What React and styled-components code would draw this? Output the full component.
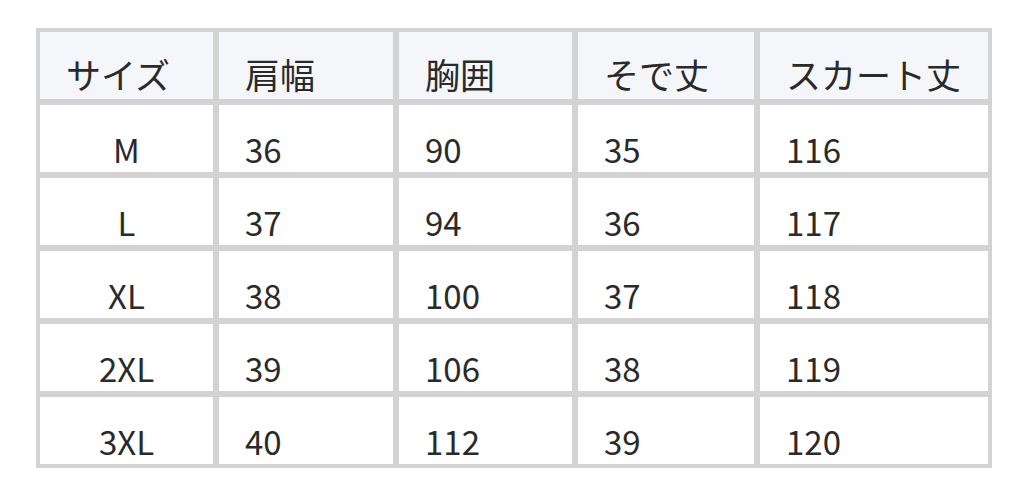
import React from 'react';
import styled, { createGlobalStyle } from 'styled-components';

const GlobalStyle = createGlobalStyle`
  body {
    margin: 0;
    background: #fff;
    font-family: "Noto Sans CJK JP", "Noto Sans", sans-serif;
  }
`;

const Page = styled.div`
  width: 1028px;
  height: 495px;
  padding: 28px 0 0 36px;
  box-sizing: border-box;
`;

const Table = styled.div`
  display: grid;
  grid-template-columns: 173px 174px 173px 176px 228px;
  grid-auto-rows: 67px;
  gap: 6px;
  width: 956px;
  box-sizing: border-box;
  padding: 4px;
  background: #d3d3d3;
`;

const Cell = styled.div`
  display: flex;
  align-items: flex-end;
  justify-content: ${(p) => (p.$center ? 'center' : 'flex-start')};
  padding: 0 0 ${(p) => (p.$head ? '5px' : '3px')} ${(p) => (p.$center ? '0' : '26px')};
  background: ${(p) => (p.$head ? '#f5f6fa' : '#fff')};
  color: #2a2a2a;
  font-size: ${(p) => (p.$head ? '35px' : '33px')};
  line-height: 40px;
  white-space: nowrap;
`;

const headers = ['サイズ', '肩幅', '胸囲', 'そで丈', 'スカート丈'];

const rows = [
  ['M', '36', '90', '35', '116'],
  ['L', '37', '94', '36', '117'],
  ['XL', '38', '100', '37', '118'],
  ['2XL', '39', '106', '38', '119'],
  ['3XL', '40', '112', '39', '120'],
];

const App = () => {
  return (
    <>
      <GlobalStyle />
      <Page>
        <Table>
          {headers.map((h) => (
            <Cell $head key={h}>{h}</Cell>
          ))}
          {rows.map((r) =>
            r.map((v, i) => (
              <Cell key={r[0] + i} $center={i === 0}>{v}</Cell>
            )),
          )}
        </Table>
      </Page>
    </>
  );
};

export default App;
